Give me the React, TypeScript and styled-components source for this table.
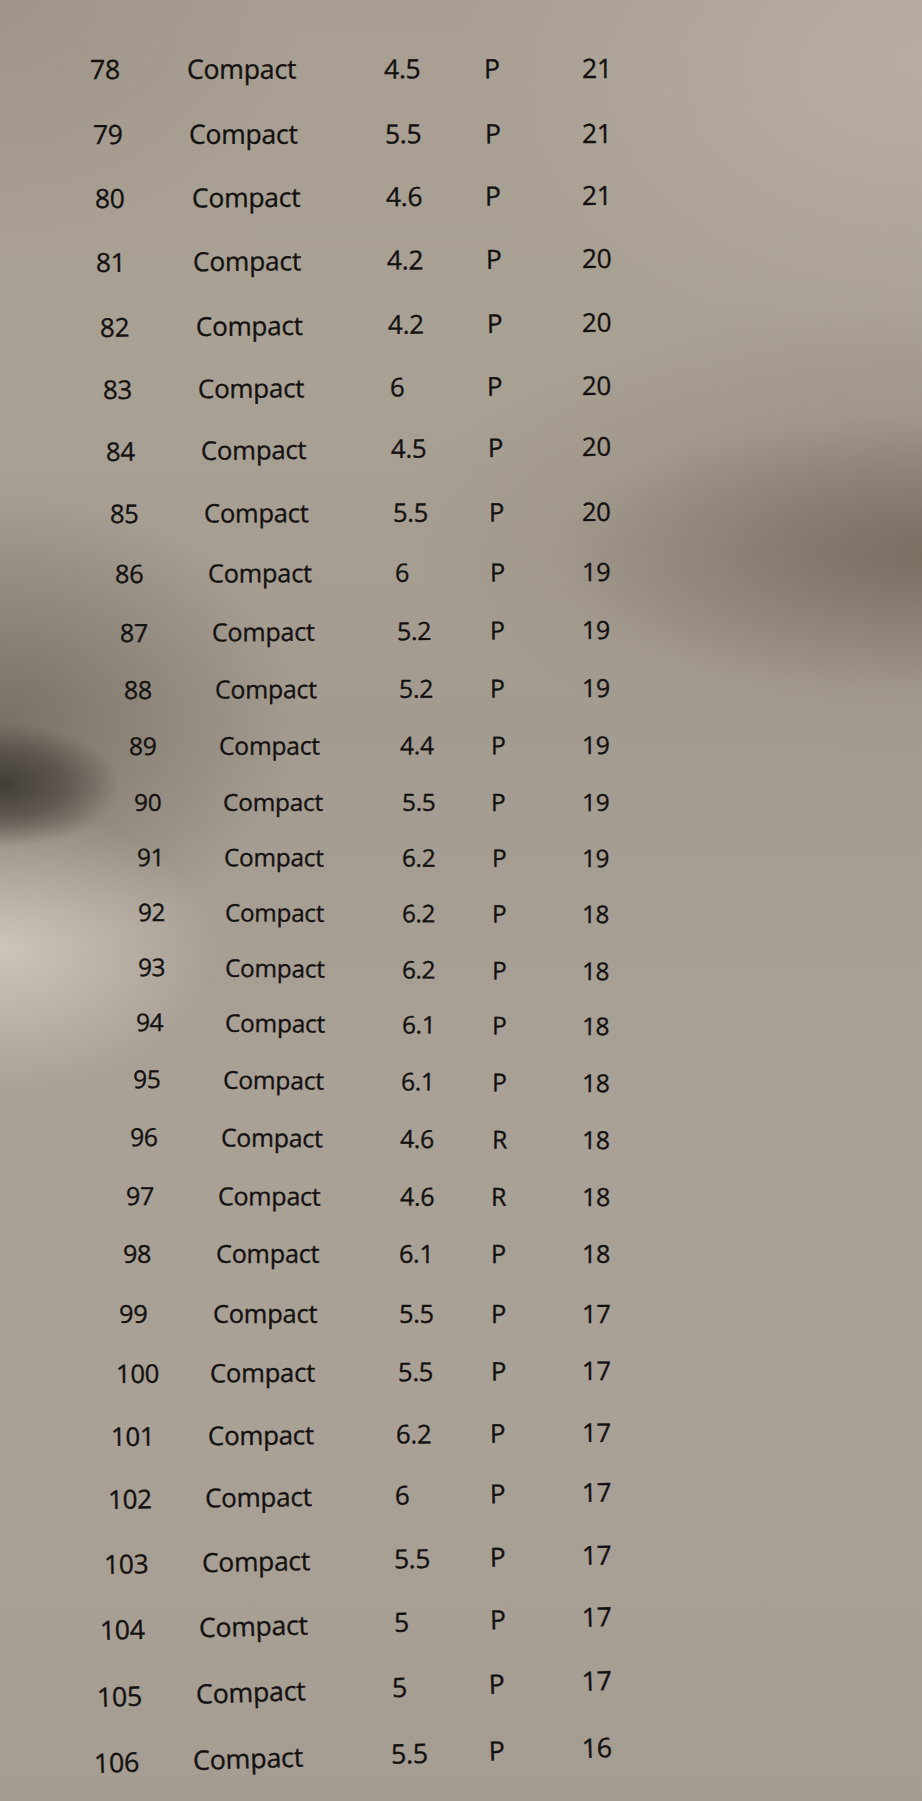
import React from "react";
import styled, { createGlobalStyle } from "styled-components";

const GlobalStyle = createGlobalStyle`
  html, body {
    margin: 0;
    padding: 0;
    background: #a79e93;
  }
  body {
    font-family: "Open Sans", "Noto Sans", "Liberation Sans", sans-serif;
  }
`;

// x: left edge of id / model / value / flag cells, y: row centre, t: tilt in px at the last column
interface IRow {
  id: number;
  value: string;
  flag: string;
  count: number;
  x: [number, number, number, number];
  y: number;
  fs: number;
  t: number;
}

const COUNT_X = 583;
const LINE = 40;

const rows: IRow[] = [
  { id: 78, value: "4.5", flag: "P", count: 21, x: [91, 188, 385, 485], y: 69, fs: 26.6, t: -1 },
  { id: 79, value: "5.5", flag: "P", count: 21, x: [94, 190, 386, 486], y: 134, fs: 26.5, t: -1 },
  { id: 80, value: "4.6", flag: "P", count: 21, x: [96, 193, 387, 486], y: 198, fs: 26.4, t: -3 },
  { id: 81, value: "4.2", flag: "P", count: 20, x: [97, 194, 388, 487], y: 262, fs: 26.3, t: -4 },
  { id: 82, value: "4.2", flag: "P", count: 20, x: [101, 197, 389, 488], y: 327, fs: 26.0, t: -5 },
  { id: 83, value: "6", flag: "P", count: 20, x: [104, 199, 391, 488], y: 389, fs: 25.9, t: -4 },
  { id: 84, value: "4.5", flag: "P", count: 20, x: [107, 202, 392, 489], y: 452, fs: 25.7, t: -5 },
  { id: 85, value: "5.5", flag: "P", count: 20, x: [111, 205, 394, 490], y: 513, fs: 25.5, t: -2 },
  { id: 86, value: "6", flag: "P", count: 19, x: [116, 209, 396, 491], y: 573, fs: 25.3, t: -2 },
  { id: 87, value: "5.2", flag: "P", count: 19, x: [121, 213, 398, 491], y: 632, fs: 25.0, t: -3 },
  { id: 88, value: "5.2", flag: "P", count: 19, x: [125, 216, 400, 491], y: 689, fs: 24.8, t: -2 },
  { id: 89, value: "4.4", flag: "P", count: 19, x: [130, 220, 401, 492], y: 746, fs: 24.6, t: -1 },
  { id: 90, value: "5.5", flag: "P", count: 19, x: [135, 224, 403, 492], y: 802, fs: 24.4, t: 0 },
  { id: 91, value: "6.2", flag: "P", count: 19, x: [138, 225, 403, 493], y: 857, fs: 24.3, t: 1 },
  { id: 92, value: "6.2", flag: "P", count: 18, x: [139, 226, 403, 493], y: 912, fs: 24.2, t: 2 },
  { id: 93, value: "6.2", flag: "P", count: 18, x: [139, 226, 403, 493], y: 967, fs: 24.3, t: 4 },
  { id: 94, value: "6.1", flag: "P", count: 18, x: [137, 226, 403, 493], y: 1022, fs: 24.4, t: 4 },
  { id: 95, value: "6.1", flag: "P", count: 18, x: [134, 224, 402, 493], y: 1079, fs: 24.6, t: 4 },
  { id: 96, value: "4.6", flag: "R", count: 18, x: [131, 222, 401, 493], y: 1136, fs: 24.8, t: 3 },
  { id: 97, value: "4.6", flag: "R", count: 18, x: [127, 219, 401, 492], y: 1195, fs: 25.0, t: 1 },
  { id: 98, value: "6.1", flag: "P", count: 18, x: [124, 217, 400, 492], y: 1253, fs: 25.2, t: 0 },
  { id: 99, value: "5.5", flag: "P", count: 17, x: [120, 214, 400, 492], y: 1313, fs: 25.4, t: 0 },
  { id: 100, value: "5.5", flag: "P", count: 17, x: [117, 211, 399, 492], y: 1374, fs: 25.6, t: -3 },
  { id: 101, value: "6.2", flag: "P", count: 17, x: [112, 209, 397, 491], y: 1436, fs: 25.8, t: -4 },
  { id: 102, value: "6", flag: "P", count: 17, x: [109, 206, 396, 491], y: 1499, fs: 26.0, t: -7 },
  { id: 103, value: "5.5", flag: "P", count: 17, x: [105, 203, 395, 491], y: 1564, fs: 26.3, t: -9 },
  { id: 104, value: "5", flag: "P", count: 17, x: [101, 200, 395, 491], y: 1630, fs: 26.5, t: -13 },
  { id: 105, value: "5", flag: "P", count: 17, x: [98, 197, 393, 490], y: 1697, fs: 26.7, t: -16 },
  { id: 106, value: "5.5", flag: "P", count: 16, x: [95, 194, 392, 490], y: 1763, fs: 26.8, t: -15 },
];

const Sheet = styled.main`
  min-height: 100vh;
  overflow: hidden;
  background:
    radial-gradient(ellipse 120px 62px at 0px 785px, rgba(55, 50, 46, 0.85), rgba(55, 50, 46, 0.5) 55%, rgba(55, 50, 46, 0) 100%),
    radial-gradient(ellipse 220px 140px at 0px 950px, rgba(214, 205, 196, 0.8), rgba(214, 205, 196, 0) 100%),
    radial-gradient(ellipse 300px 230px at 0px 720px, rgba(78, 70, 62, 0.5), rgba(78, 70, 62, 0) 100%),
    radial-gradient(ellipse 380px 140px at 930px 555px, rgba(100, 88, 74, 0.6), rgba(100, 88, 74, 0) 100%),
    radial-gradient(ellipse 520px 230px at 922px 520px, rgba(120, 108, 94, 0.35), rgba(120, 108, 94, 0) 100%),
    radial-gradient(ellipse 460px 300px at 922px 60px, rgba(196, 186, 174, 0.55), rgba(196, 186, 174, 0) 100%),
    radial-gradient(ellipse 300px 260px at 0px 0px, rgba(140, 130, 118, 0.35), rgba(140, 130, 118, 0) 100%),
    linear-gradient(to bottom, #a89e92 0%, #aaa195 20%, #a49b90 40%, #a9a096 60%, #a9a096 80%, #a59c92 100%);
`;

const Table = styled.div`
  display: flex;
  flex-direction: column;
  padding-top: ${rows[0].y - LINE / 2}px;
  color: #131110;
  -webkit-text-stroke: 0.35px #131110;
`;

const Row = styled.div<{ $cols: string; $pad: number; $h: number; $fs: number; $deg: number }>`
  display: grid;
  grid-template-columns: ${(p) => p.$cols};
  padding-left: ${(p) => p.$pad}px;
  height: ${(p) => p.$h}px;
  font-size: ${(p) => p.$fs}px;
  line-height: ${LINE}px;
  transform: rotate(${(p) => p.$deg}deg);
  transform-origin: ${(p) => p.$pad}px ${LINE / 2}px;
  white-space: nowrap;
`;

const IdCell = styled.span`
  letter-spacing: -0.3px;
`;

const ModelCell = styled.span`
  letter-spacing: -0.2px;
`;

const ValueCell = styled.span`
  letter-spacing: -0.3px;
`;

const FlagCell = styled.span``;

const CountCell = styled.span`
  letter-spacing: -0.3px;
`;

function App() {
  return (
    <Sheet>
      <GlobalStyle />
      <Table>
        {rows.map((row, i) => {
          const [n, c, v, p] = row.x;
          const next = rows[i + 1];
          const h = next ? next.y - row.y : 40;
          const cols = `${c - n}px ${v - c}px ${p - v}px ${COUNT_X - p}px auto`;
          const deg = (Math.atan(row.t / (COUNT_X - n)) * 180) / Math.PI;
          return (
            <Row key={row.id} $cols={cols} $pad={n - 1} $h={h} $fs={row.fs} $deg={deg}>
              <IdCell>{row.id}</IdCell>
              <ModelCell>Compact</ModelCell>
              <ValueCell>{row.value}</ValueCell>
              <FlagCell>{row.flag}</FlagCell>
              <CountCell>{row.count}</CountCell>
            </Row>
          );
        })}
      </Table>
    </Sheet>
  );
}

export default App;
